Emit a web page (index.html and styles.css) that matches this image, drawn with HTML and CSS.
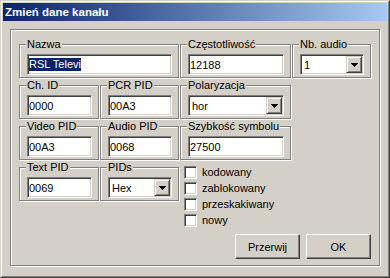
FILE: index.html
```html
<!DOCTYPE html>
<html lang="pl">
<head>
<meta charset="utf-8">
<title>Zmień dane kanału</title>
<link rel="stylesheet" href="styles.css">
</head>
<body>
<div class="window">
  <div class="frame">
    <div class="titlebar">Zmień dane kanału</div>
    <div class="panel">
      <div class="grid">
        <fieldset class="group c1 span2"><legend>Nazwa</legend><div class="field"><span class="sel">RSL Televi</span></div></fieldset>
        <fieldset class="group"><legend>Częstotliwość</legend><div class="field">12188</div></fieldset>
        <fieldset class="group"><legend>Nb. audio</legend>
          <div class="field combo"><span class="val">1</span><span class="drop"><svg width="7" height="4" viewBox="0 0 7 4"><polygon points="0,0 7,0 3.5,4" fill="#000"/></svg></span></div>
        </fieldset>

        <fieldset class="group c1"><legend>Ch. ID</legend><div class="field">0000</div></fieldset>
        <fieldset class="group"><legend>PCR PID</legend><div class="field">00A3</div></fieldset>
        <fieldset class="group"><legend>Polaryzacja</legend>
          <div class="field combo"><span class="val">hor</span><span class="drop"><svg width="7" height="4" viewBox="0 0 7 4"><polygon points="0,0 7,0 3.5,4" fill="#000"/></svg></span></div>
        </fieldset>

        <fieldset class="group c1"><legend>Video PID</legend><div class="field">00A3</div></fieldset>
        <fieldset class="group"><legend>Audio PID</legend><div class="field">0068</div></fieldset>
        <fieldset class="group"><legend>Szybkość symbolu</legend><div class="field">27500</div></fieldset>

        <fieldset class="group c1"><legend>Text PID</legend><div class="field">0069</div></fieldset>
        <fieldset class="group"><legend>PIDs</legend>
          <div class="field combo"><span class="val">Hex</span><span class="drop"><svg width="7" height="4" viewBox="0 0 7 4"><polygon points="0,0 7,0 3.5,4" fill="#000"/></svg></span></div>
        </fieldset>
        <div class="checks">
          <div class="check"><span class="cb"></span><span>kodowany</span></div>
          <div class="check"><span class="cb"></span><span>zablokowany</span></div>
          <div class="check"><span class="cb"></span><span>przeskakiwany</span></div>
          <div class="check"><span class="cb"></span><span>nowy</span></div>
        </div>
      </div>
      <div class="buttons">
        <div class="btn">Przerwij</div>
        <div class="btn">OK</div>
      </div>
    </div>
  </div>
</div>
</body>
</html>
```

FILE: styles.css
```css
body {
  margin: 0;
  background: #d4d0c8;
  font-family: "Liberation Sans", Arial, sans-serif;
  font-size: 11px;
  color: #000;
}

.window {
  width: 390px;
  height: 278px;
  box-sizing: border-box;
  border: 1px solid;
  border-color: #d4d0c8 #404040 #404040 #d4d0c8;
  background: #d4d0c8;
}

.frame {
  height: 100%;
  box-sizing: border-box;
  border: 1px solid;
  border-color: #ffffff #808080 #808080 #ffffff;
  padding: 1px;
}

.titlebar {
  height: 18px;
  line-height: 18px;
  padding-left: 2px;
  background: linear-gradient(to right, #0a246a, #a6caf0);
  color: #ffffff;
  font-weight: bold;
  font-size: 11.5px;
  white-space: nowrap;
}

.panel {
  margin: 8px 7px 0 7px;
  height: 237px;
  box-sizing: border-box;
  border: 1px solid #808080;
  box-shadow: 1px 1px 0 #ffffff, inset 1px 1px 0 #ffffff;
  padding: 8px 8px 6px 8px;
  display: flex;
  flex-direction: column;
}

.grid {
  display: grid;
  grid-template-columns: 80px 79px 111px 79px;
  gap: 1px;
  align-items: start;
}

.c1 { grid-column-start: 1; }
.span2 { grid-column: 1 / span 2; }

.group {
  margin: 0;
  min-width: 0;
  padding: 3px 6px 2px 7px;
  border: 1px solid #808080;
  box-shadow: 1px 1px 0 #ffffff, inset 1px 1px 0 #ffffff;
}

.group legend {
  padding: 0 1px;
  margin-left: -1px;
  height: 13px;
  line-height: 13px;
  background: #d4d0c8;
  white-space: nowrap;
}

.field {
  height: 21px;
  box-sizing: border-box;
  border: 1px solid;
  border-color: #808080 #ffffff #ffffff #808080;
  box-shadow: inset 1px 1px 0 #404040, inset -1px -1px 0 #d4d0c8;
  background: #ffffff;
  padding: 0 1px;
  display: flex;
  align-items: center;
  white-space: nowrap;
  overflow: hidden;
}

.sel {
  background: #0a246a;
  color: #ffffff;
  height: 13px;
  line-height: 13px;
}

.combo {
  padding: 1px;
  align-items: stretch;
}

.combo .val {
  flex: 1;
  padding-left: 2px;
  display: flex;
  align-items: center;
}

.drop {
  width: 16px;
  height: 17px;
  box-sizing: border-box;
  border: 1px solid;
  border-color: #d4d0c8 #404040 #404040 #d4d0c8;
  box-shadow: inset 1px 1px 0 #ffffff, inset -1px -1px 0 #808080;
  background: #d4d0c8;
  display: flex;
  align-items: center;
  justify-content: center;
}

.drop svg {
  display: block;
  shape-rendering: crispEdges;
}

.checks {
  grid-column: 3 / span 2;
  padding-top: 3px;
  padding-left: 4px;
}

.check {
  height: 16px;
  display: flex;
  align-items: center;
  gap: 5px;
}

.cb {
  width: 13px;
  height: 13px;
  box-sizing: border-box;
  border: 1px solid;
  border-color: #808080 #ffffff #ffffff #808080;
  box-shadow: inset 1px 1px 0 #404040, inset -1px -1px 0 #d4d0c8;
  background: #ffffff;
}

.buttons {
  margin-top: auto;
  display: flex;
  justify-content: flex-end;
  gap: 6px;
}

.btn {
  width: 65px;
  height: 25px;
  box-sizing: border-box;
  border: 1px solid;
  border-color: #ffffff #404040 #404040 #ffffff;
  box-shadow: inset -1px -1px 0 #808080;
  display: flex;
  align-items: center;
  justify-content: center;
}
```
